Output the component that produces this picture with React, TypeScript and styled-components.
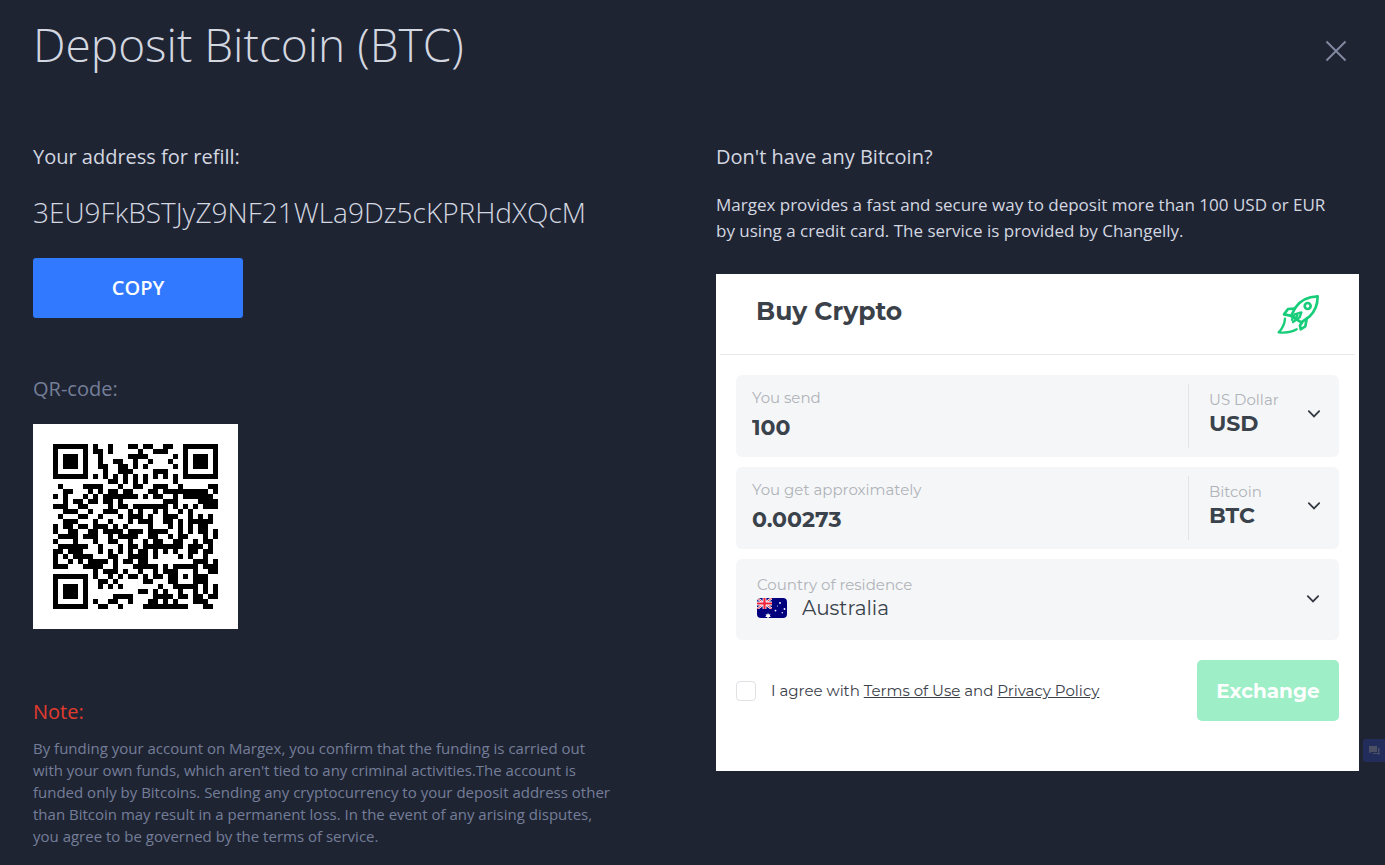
import React from "react";
import styled, { createGlobalStyle, css } from "styled-components";

const ADDRESS = "3EU9FkBSTJyZ9NF21WLa9Dz5cKPRHdXQcM";

/* ---------- QR code (version 4, error correction Q, mask 5) ---------- */

const SIZE = 33;
const DATA_PER_BLOCK = 24;
const ECC_PER_BLOCK = 26;
const FORMAT_BITS = 0b010000110000011;

function gfMultiply(a: number, b: number): number {
  let product = 0;
  for (let i = 7; i >= 0; i--) {
    product = (product << 1) ^ ((product >>> 7) * 0x11d);
    product ^= ((b >>> i) & 1) * a;
  }
  return product;
}

function eccFor(data: number[]): number[] {
  const divisor: number[] = new Array(ECC_PER_BLOCK).fill(0);
  divisor[ECC_PER_BLOCK - 1] = 1;
  let root = 1;
  for (let i = 0; i < ECC_PER_BLOCK; i++) {
    for (let j = 0; j < ECC_PER_BLOCK; j++) {
      divisor[j] = gfMultiply(divisor[j], root);
      if (j + 1 < ECC_PER_BLOCK) divisor[j] ^= divisor[j + 1];
    }
    root = gfMultiply(root, 2);
  }
  const result: number[] = new Array(ECC_PER_BLOCK).fill(0);
  data.forEach((byte) => {
    const factor = byte ^ (result.shift() as number);
    result.push(0);
    divisor.forEach((d, i) => (result[i] ^= gfMultiply(d, factor)));
  });
  return result;
}

function codewords(text: string): number[] {
  const bits: number[] = [];
  const push = (value: number, length: number) => {
    for (let i = length - 1; i >= 0; i--) bits.push((value >>> i) & 1);
  };
  push(4, 4);
  push(text.length, 8);
  for (const ch of text) push(ch.charCodeAt(0), 8);
  push(0, 4);
  const bytes: number[] = [];
  for (let i = 0; i < bits.length; i += 8) {
    bytes.push(parseInt(bits.slice(i, i + 8).join(""), 2));
  }
  for (let pad = 0xec; bytes.length < DATA_PER_BLOCK * 2; pad ^= 0xec ^ 0x11) bytes.push(pad);
  const blocks = [bytes.slice(0, DATA_PER_BLOCK), bytes.slice(DATA_PER_BLOCK)];
  const eccs = blocks.map(eccFor);
  const out: number[] = [];
  for (let i = 0; i < DATA_PER_BLOCK; i++) blocks.forEach((b) => out.push(b[i]));
  for (let i = 0; i < ECC_PER_BLOCK; i++) eccs.forEach((e) => out.push(e[i]));
  return out;
}

function qrMatrix(text: string): boolean[][] {
  const grid: (boolean | null)[][] = Array.from({ length: SIZE }, () => new Array(SIZE).fill(null));
  for (let i = 0; i < SIZE; i++) {
    grid[6][i] = i % 2 === 0;
    grid[i][6] = i % 2 === 0;
  }
  const finder = (cr: number, cc: number) => {
    for (let dr = -4; dr <= 4; dr++)
      for (let dc = -4; dc <= 4; dc++) {
        const r = cr + dr;
        const c = cc + dc;
        if (r < 0 || c < 0 || r >= SIZE || c >= SIZE) continue;
        const ring = Math.max(Math.abs(dr), Math.abs(dc));
        grid[r][c] = ring !== 2 && ring !== 4;
      }
  };
  finder(3, 3);
  finder(3, SIZE - 4);
  finder(SIZE - 4, 3);
  for (let dr = -2; dr <= 2; dr++)
    for (let dc = -2; dc <= 2; dc++)
      grid[26 + dr][26 + dc] = Math.max(Math.abs(dr), Math.abs(dc)) !== 1;

  const format = (i: number) => ((FORMAT_BITS >>> i) & 1) === 1;
  for (let i = 0; i <= 5; i++) grid[i][8] = format(i);
  grid[7][8] = format(6);
  grid[8][8] = format(7);
  grid[8][7] = format(8);
  for (let i = 9; i < 15; i++) grid[8][14 - i] = format(i);
  for (let i = 0; i < 8; i++) grid[8][SIZE - 1 - i] = format(i);
  for (let i = 8; i < 15; i++) grid[SIZE - 15 + i][8] = format(i);
  grid[SIZE - 8][8] = true;

  const data = codewords(text);
  let index = 0;
  for (let right = SIZE - 1; right >= 1; right -= 2) {
    if (right === 6) right = 5;
    for (let step = 0; step < SIZE; step++) {
      for (let j = 0; j < 2; j++) {
        const c = right - j;
        const upward = ((right + 1) & 2) === 0;
        const r = upward ? SIZE - 1 - step : step;
        if (grid[r][c] !== null) continue;
        const bit = index < data.length * 8 ? (data[index >>> 3] >>> (7 - (index & 7))) & 1 : 0;
        index++;
        const flip = ((r * c) % 2) + ((r * c) % 3) === 0;
        grid[r][c] = (bit === 1) !== flip;
      }
    }
  }
  return grid as boolean[][];
}

const QR_PATH = qrMatrix(ADDRESS)
  .map((row, r) => row.map((dark, c) => (dark ? `M${c} ${r}h1v1h-1z` : "")).join(""))
  .join("");

/* ---------- Styles ---------- */

const GlobalStyle = createGlobalStyle`
  *, *::before, *::after { box-sizing: border-box; }
  body {
    margin: 0;
    background: #1f2433;
    color: #d3d7e0;
    font-family: "Open Sans", "Noto Sans", sans-serif;
  }
  h1, h2, p { margin: 0; }
  button, input, select { font-family: inherit; }
`;

const Page = styled.main`
  padding: 10px 26px 16px 33px;
`;

const Header = styled.header`
  display: flex;
  justify-content: space-between;
  align-items: flex-start;
  margin-bottom: 66px;
`;

const Title = styled.h1`
  font-size: 46px;
  line-height: 68px;
  font-weight: 300;
`;

const CloseButton = styled.button`
  display: flex;
  margin: 30px 12px 0 0;
  padding: 0;
  border: 0;
  background: none;
  color: #8088a0;
  cursor: pointer;
`;

const Columns = styled.div`
  display: grid;
  grid-template-columns: 1fr 1fr;
  gap: 40px;
`;

const Column = styled.section`
  display: flex;
  flex-direction: column;
  align-items: flex-start;
`;

const Heading = styled.h2<{ $tone?: "muted" | "danger" }>`
  font-size: 20px;
  line-height: 26px;
  font-weight: 400;
  ${({ $tone }) => $tone === "muted" && css`color: #747e98;`}
  ${({ $tone }) => $tone === "danger" && css`color: #e23b2e;`}
`;

const Address = styled.p`
  margin: 22px 0 26px;
  font-size: 28px;
  line-height: 40px;
  font-weight: 300;
`;

const CopyButton = styled.button`
  width: 210px;
  height: 60px;
  margin-bottom: 58px;
  padding: 0 0 2px;
  border: 0;
  border-radius: 3px;
  background: #3179ff;
  color: #fff;
  font-size: 20px;
  font-weight: 600;
  cursor: pointer;
`;

const QrCode = styled.svg`
  width: 205px;
  height: 205px;
  margin: 22px 0 70px;
  padding: 20px;
  background: #fff;
`;

const Note = styled.p`
  max-width: 580px;
  margin-top: 12px;
  color: #747e98;
  font-size: 15px;
  line-height: 22px;
`;

const Intro = styled.p`
  max-width: 630px;
  margin: 22px 0 30px;
  font-size: 17px;
  line-height: 26px;
`;

const Widget = styled.form`
  width: 100%;
  padding: 0 20px 50px;
  background: #fff;
  color: #3a4149;
  font-family: Montserrat, Inter, sans-serif;
`;

const WidgetHeader = styled.div`
  display: flex;
  justify-content: space-between;
  align-items: center;
  height: 81px;
  margin: 0 -16px 20px;
  padding: 0 35px 0 36px;
  border-bottom: 1px solid #e6e8ea;
`;

const WidgetTitle = styled.h2`
  margin-bottom: 6px;
  font-size: 25px;
  line-height: 32px;
  font-weight: 700;
`;

const Fields = styled.div`
  display: flex;
  flex-direction: column;
  gap: 10px;
`;

const FieldRow = styled.div`
  display: flex;
  align-items: center;
  height: 82px;
  padding: 0 16px;
  border-radius: 6px;
  background: #f5f6f8;
`;

const Field = styled.div`
  display: flex;
  flex: 1;
  flex-direction: column;
  padding-bottom: 2px;
`;

const Label = styled.label`
  color: #b0b3b8;
  font-size: 15px;
  line-height: 20px;
`;

const valueStyle = css`
  width: 100%;
  padding: 0;
  border: 0;
  outline: 0;
  background: transparent;
  color: #3a434b;
`;

const Amount = styled.input`
  ${valueStyle}
  height: 30px;
  margin-top: 4px;
  font-size: 22px;
  font-weight: 700;
`;

const CurrencyBox = styled.div`
  display: flex;
  align-items: center;
  width: 135px;
  height: 64px;
  padding: 0 2px 4px 20px;
  border-left: 1px solid #e3e5e8;
`;

const Select = styled.select<{ $light?: boolean }>`
  ${valueStyle}
  appearance: none;
  height: 26px;
  font-size: ${({ $light }) => ($light ? 20 : 22)}px;
  font-weight: ${({ $light }) => ($light ? 400 : 700)};
`;

const CountryLine = styled.div`
  display: flex;
  align-items: center;
  gap: 15px;
`;

const CountryRow = styled(FieldRow)`
  height: 81px;
  padding: 0 19px 2px 21px;
`;

const ConsentRow = styled.div`
  display: flex;
  justify-content: space-between;
  align-items: center;
  margin-top: 20px;
`;

const Consent = styled.label`
  display: flex;
  align-items: center;
  gap: 15px;
  font-size: 15px;
  line-height: 20px;

  a { color: inherit; }
`;

const Checkbox = styled.input`
  appearance: none;
  width: 20px;
  height: 20px;
  margin: 0;
  border: 1px solid #dfe1e4;
  border-radius: 4px;
  background: #fff;
`;

const ExchangeButton = styled.button`
  width: 142px;
  height: 61px;
  border: 0;
  border-radius: 5px;
  background: #9eeec8;
  color: #fff;
  font-size: 20px;
  font-weight: 700;
`;

const ChatButton = styled.button`
  position: fixed;
  top: 739px;
  right: 0;
  display: flex;
  align-items: center;
  justify-content: center;
  width: 22px;
  height: 23px;
  padding: 0;
  border: 0;
  border-radius: 3px 0 0 3px;
  background: #222d5c;
`;

const FlagSvg = styled.svg`
  flex: none;
`;

/* ---------- Icons ---------- */

const Chevron = () => (
  <svg width="14" height="10" viewBox="0 0 14 10" fill="none" stroke="#343a42" strokeWidth="1.8" strokeLinecap="round" aria-hidden="true">
    <path d="M1.8 2.2 7 7.5l5.2-5.3" />
  </svg>
);

const Rocket = () => (
  <svg width="44" height="41" viewBox="50 39 132 123" fill="none" stroke="#18cd79" strokeWidth="8" strokeLinejoin="round" strokeLinecap="round" aria-hidden="true">
    <path d="M175 46C146 47 122 59 108 80L95 105 126 124 150 107C168 91 175 73 175 46Z" />
    <circle cx="145" cy="75" r="9" />
    <path d="M107 83 86 84 74 100 93 104" />
    <path d="M128 125 122 133 124 145 138 136 142 114" />
    <path d="M98 116 106 100 126 94 121 109 101 123M108 111 114 104" strokeWidth="7" />
    <path d="M77 113C76 129 68 144 58 154 78 156 98 154 112 145" strokeWidth="7" />
  </svg>
);

const Flag = () => (
  <FlagSvg width="30" height="20" viewBox="0 0 30 20" aria-hidden="true">
    <defs>
      <clipPath id="flag-shape"><rect width="30" height="20" rx="4" /></clipPath>
      <clipPath id="canton"><rect width="15" height="11" /></clipPath>
    </defs>
    <g clipPath="url(#flag-shape)">
      <rect width="30" height="20" fill="#00007f" />
      <g clipPath="url(#canton)">
        <path d="M0 0 15 11M15 0 0 11" stroke="#fff" strokeWidth="2.4" />
        <path d="M0 0 15 11M15 0 0 11" stroke="#e8344a" strokeWidth="1" />
        <path d="M7.5 0V11M0 5.5H15" stroke="#fff" strokeWidth="3.8" />
        <path d="M7.5 0V11M0 5.5H15" stroke="#f0203a" strokeWidth="2.2" />
      </g>
      <g fill="#fff">
        <path d="m11 14.8.8 1.6 1.8-.2-.8 1.5 1.1 1.3-1.8.1-1.1 1.3-1-1.3-1.8-.1 1.1-1.3-.8-1.5 1.8.2z" />
        <circle cx="23" cy="5" r=".9" />
        <circle cx="18.5" cy="12.6" r=".9" />
        <circle cx="27.5" cy="11" r=".9" />
        <circle cx="25.3" cy="14.8" r=".7" />
        <circle cx="20.5" cy="8" r=".5" />
      </g>
    </g>
  </FlagSvg>
);

/* ---------- Page ---------- */

interface ExchangeFieldProps {
  id: string;
  label: string;
  amount: string;
  currencyName: string;
  currency: string;
}

const ExchangeField = ({ id, label, amount, currencyName, currency }: ExchangeFieldProps) => (
  <FieldRow>
    <Field>
      <Label htmlFor={`${id}-amount`}>{label}</Label>
      <Amount id={`${id}-amount`} defaultValue={amount} />
    </Field>
    <CurrencyBox>
      <Field>
        <Label htmlFor={`${id}-currency`}>{currencyName}</Label>
        <Select id={`${id}-currency`} defaultValue={currency}>
          <option>{currency}</option>
        </Select>
      </Field>
      <Chevron />
    </CurrencyBox>
  </FieldRow>
);

export default function App() {
  return (
    <>
      <GlobalStyle />
      <Page>
        <Header>
          <Title>Deposit Bitcoin (BTC)</Title>
          <CloseButton type="button" aria-label="Close">
            <svg width="22" height="22" viewBox="0 0 22 22" fill="none" stroke="currentColor" strokeWidth="2">
              <path d="M1.5 1.5 20.5 20.5M20.5 1.5 1.5 20.5" />
            </svg>
          </CloseButton>
        </Header>

        <Columns>
          <Column>
            <Heading>Your address for refill:</Heading>
            <Address>{ADDRESS}</Address>
            <CopyButton type="button">COPY</CopyButton>
            <Heading $tone="muted">QR-code:</Heading>
            <QrCode viewBox={`0 0 ${SIZE} ${SIZE}`} shapeRendering="crispEdges" role="img" aria-label="QR code of the deposit address">
              <path d={QR_PATH} fill="#000" />
            </QrCode>
            <Heading $tone="danger">Note:</Heading>
            <Note>
              By funding your account on Margex, you confirm that the funding is carried out with your own funds, which
              aren't tied to any criminal activities.The account is funded only by Bitcoins. Sending any cryptocurrency
              to your deposit address other than Bitcoin may result in a permanent loss. In the event of any arising
              disputes, you agree to be governed by the terms of service.
            </Note>
          </Column>

          <Column>
            <Heading>Don't have any Bitcoin?</Heading>
            <Intro>
              Margex provides a fast and secure way to deposit more than 100 USD or EUR by using a credit card. The
              service is provided by Changelly.
            </Intro>
            <Widget onSubmit={(event) => event.preventDefault()}>
              <WidgetHeader>
                <WidgetTitle>Buy Crypto</WidgetTitle>
                <Rocket />
              </WidgetHeader>
              <Fields>
                <ExchangeField id="send" label="You send" amount="100" currencyName="US Dollar" currency="USD" />
                <ExchangeField id="get" label="You get approximately" amount="0.00273" currencyName="Bitcoin" currency="BTC" />
                <CountryRow>
                  <Field>
                    <Label htmlFor="country">Country of residence</Label>
                    <CountryLine>
                      <Flag />
                      <Select id="country" $light defaultValue="Australia">
                        <option>Australia</option>
                      </Select>
                    </CountryLine>
                  </Field>
                  <Chevron />
                </CountryRow>
              </Fields>
              <ConsentRow>
                <Consent>
                  <Checkbox type="checkbox" />
                  <span>
                    I agree with <a href="#terms">Terms of Use</a> and <a href="#privacy">Privacy Policy</a>
                  </span>
                </Consent>
                <ExchangeButton type="submit">Exchange</ExchangeButton>
              </ConsentRow>
            </Widget>
          </Column>
        </Columns>
      </Page>
      <ChatButton type="button" aria-label="Open chat">
        <svg width="12" height="11" viewBox="0 0 12 11" fill="#4b5064" aria-hidden="true">
          <path d="M1 1h8v6H4L1 8zM10 3h1.500v7L9.500 9H5V8h5z" />
        </svg>
      </ChatButton>
    </>
  );
}
